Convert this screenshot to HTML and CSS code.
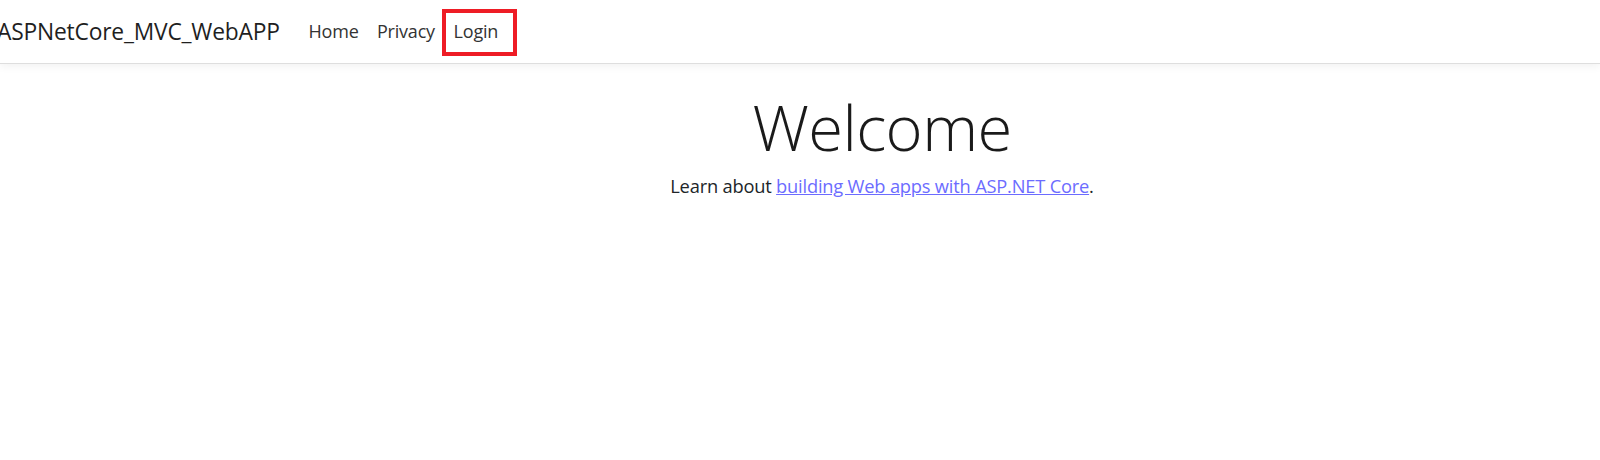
FILE: index.html
```html
<!DOCTYPE html>
<html lang="en">
<head>
<meta charset="utf-8">
<title>ASPNetCore_MVC_WebAPP</title>
<link rel="stylesheet" href="styles.css">
</head>
<body>
<header class="topbar">
  <nav class="nav">
    <a class="brand" href="#">ASPNetCore_MVC_WebAPP</a>
    <ul class="links">
      <li><a class="link" href="#">Home</a></li>
      <li><a class="link" href="#">Privacy</a></li>
      <li class="highlight"><a class="link" href="#">Login</a></li>
    </ul>
  </nav>
</header>
<main class="main">
  <div class="hero">
    <h1 class="title">Welcome</h1>
    <p class="lead">Learn about <a class="doc" href="#">building Web apps with ASP.NET Core</a>.</p>
  </div>
</main>
</body>
</html>
```
FILE: styles.css
```css
* { box-sizing: border-box; }
html, body { margin: 0; padding: 0; background: #fff; }
body {
  font-family: "Open Sans", "Noto Sans", "Liberation Sans", sans-serif;
  color: #212529;
  font-size: 18px;
  line-height: 1.5;
}
.topbar {
  height: 64px;
  border-bottom: 1px solid #dedede;
  box-shadow: 0 3px 8px rgba(0,0,0,0.05);
  background: #fff;
}
.nav {
  height: 100%;
  display: flex;
  align-items: center;
  padding-left: 0;
}
.brand {
  font-size: 22.8px;
  color: #1f1f1f;
  text-decoration: none;
  margin-left: -3px;
  margin-right: 19.5px;
  letter-spacing: -0.2px;
  padding-top: 2px;
}
.links {
  list-style: none;
  margin: 0;
  padding: 0;
  display: flex;
  align-items: center;
  height: 100%;
}
.links li { display: flex; align-items: center; }
.link {
  display: block;
  padding: 6px 9.2px;
  color: #333;
  text-decoration: none;
  font-size: 18px;
  letter-spacing: -0.2px;
}
.highlight {
  border: 4px solid #ee1c25;
  height: 47px;
  margin-top: 2px;
  margin-left: -2.5px;
}
.highlight .link {
  padding-left: 8px;
  padding-right: 15px;
  margin-top: -3px;
}
.main {
  padding-left: 164px;
}
.hero {
  text-align: center;
  padding-top: 25px;
}
.title {
  margin: 0 0 7px 0;
  font-size: 63.3px;
  font-weight: 300;
  line-height: 1.2;
  color: #1a1a1a;
  letter-spacing: -0.6px;
}
.lead {
  margin: 0;
  font-size: 18.3px;
  letter-spacing: -0.2px;
}
.doc { color: #6c6cff; text-decoration: underline; }
```
